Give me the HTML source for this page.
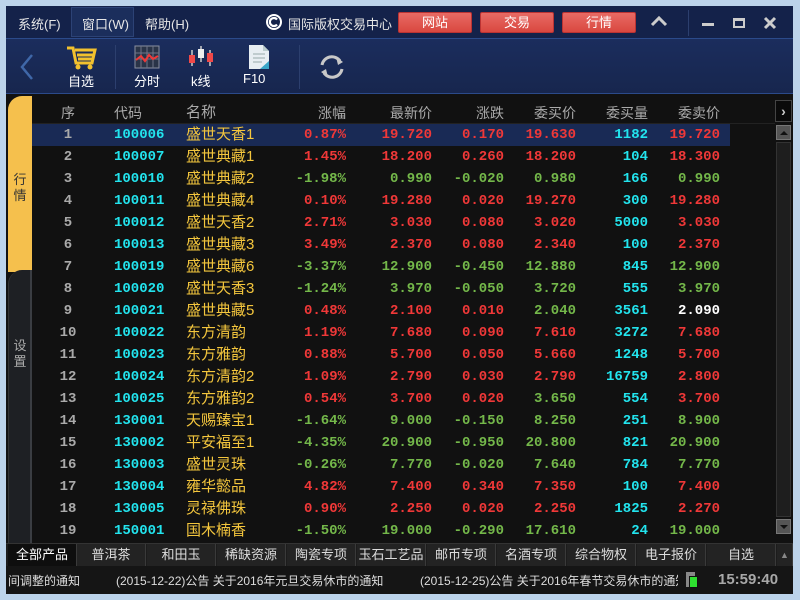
<!DOCTYPE html>
<html><head><meta charset="utf-8"><style>
*{margin:0;padding:0;box-sizing:border-box}
body{width:800px;height:600px;overflow:hidden;background:#bcd3ea;font-family:"Liberation Sans","Noto Sans CJK SC",sans-serif;position:relative}
.win{position:absolute;left:6px;top:6px;width:787px;height:588px;background:#111}
.menu{position:absolute;left:0;top:0;width:787px;height:32px;background:#14224a;color:#e6e6e6;font-size:13px}
.menu span{position:absolute;top:8px}
.mtab{position:absolute;left:65px;top:1px;width:63px;height:30px;background:#1b2e5c;border:1px solid #2c4275}
.btn{position:absolute;top:6px;height:21px;width:74px;background:linear-gradient(#e86a64,#d94840);border:1px solid #b33;border-radius:2px;color:#fff;font-size:13px;text-align:center;line-height:19px}
.tool{position:absolute;left:0;top:32px;width:787px;height:56px;background:linear-gradient(#1b2d5d,#17264e);border-top:1px solid #2b4a8a;border-bottom:1px solid #2b4a8a}
.tool .lbl{position:absolute;top:32px;color:#fff;font-size:13px}
.sep{position:absolute;top:6px;width:1px;height:44px;background:#2c3f6e}
.tab1{position:absolute;left:2px;top:90px;width:24px;height:176px;background:#f5c04d;border-radius:14px 0 0 0;color:#333;font-size:13px;text-align:center}
.tab2{position:absolute;left:2px;top:264px;width:24px;height:274px;background:#1e2024;border-left:1px solid #333;border-right:2px solid #3a3d42;border-radius:14px 0 0 0;color:#aaa;font-size:13px;text-align:center}
.grid{position:absolute;left:26px;top:88px;width:743px;height:450px;font-family:"Liberation Mono","Noto Sans CJK SC",monospace;font-weight:bold;font-size:14px}
.r{position:absolute;left:0;width:698px;height:22px;line-height:22px}
.r span{position:absolute;top:0;white-space:nowrap}
.a{left:16px;width:40px;text-align:center;color:#aaa}
.b{left:82px;color:#22e4ee}
.c{left:154px;color:#f4c63d;font-family:"Liberation Sans","Noto Sans CJK SC",sans-serif;font-weight:normal;font-size:15px}
.d{right:352px;text-align:right}.e{right:266px;text-align:right}.f{right:194px;text-align:right}.g{right:122px;text-align:right}.h{right:50px;text-align:right;color:#22e4ee}.i{right:-22px;text-align:right}
.R{color:#f03838}.G{color:#74b84a}.W{color:#fff}
.hd span{color:#aaa;font-family:"Liberation Sans","Noto Sans CJK SC",sans-serif;font-weight:normal}
.sb{position:absolute;left:769px;top:88px;width:18px;height:450px;background:#111}
.btabs{position:absolute;left:0;top:537px;width:787px;height:23px;background:#1c1c1c;border-top:1px solid #333}
.bt{position:absolute;top:0;height:23px;width:69px;border-right:1px solid #3a3a3a;background:#232323;color:#ddd;font-size:13px;text-align:center;line-height:22px}
.status{position:absolute;left:0;top:560px;width:787px;height:28px;background:#151515;color:#ddd;font-size:12px}
.status span{position:absolute;top:6px;white-space:nowrap}
</style></head><body>
<div class="win">
<div class="menu">
 <div class="mtab"></div>
 <span style="left:12px">系统(F)</span><span style="left:76px">窗口(W)</span><span style="left:139px">帮助(H)</span>
 <svg style="position:absolute;left:259px;top:7px" width="18" height="18"><circle cx="9" cy="9" r="8" fill="#fff"/><circle cx="9" cy="9" r="6" fill="#14224a"/><path d="M12 6.5A4 4 0 1 0 12 11.5" stroke="#fff" stroke-width="2.2" fill="none"/></svg>
 <span style="left:282px">国际版权交易中心</span>
 <div class="btn" style="left:392px">网站</div><div class="btn" style="left:474px">交易</div><div class="btn" style="left:556px">行情</div>
 <svg style="position:absolute;left:644px;top:8px" width="18" height="14"><path d="M2 11L9 4L16 11" stroke="#ccc" stroke-width="3" fill="none"/></svg>
 <div style="position:absolute;left:682px;top:4px;width:1px;height:26px;background:#2c3f6e"></div>
 <div style="position:absolute;left:696px;top:17px;width:12px;height:3px;background:#ccc"></div>
 <div style="position:absolute;left:727px;top:12px;width:12px;height:10px;border:2px solid #ccc;border-top-width:3px"></div>
 <svg style="position:absolute;left:757px;top:10px" width="14" height="14"><path d="M2 2L12 12M12 2L2 12" stroke="#ccc" stroke-width="3"/></svg>
</div>
<div class="tool">
 <svg style="position:absolute;left:12px;top:14px" width="18" height="28"><path d="M14 2L4 14L14 26" stroke="#3f67a8" stroke-width="2.5" fill="none"/></svg>
 <svg style="position:absolute;left:60px;top:6px" width="32" height="26"><path d="M1 3H7L10 18H26L29 5H9M11 10H28M12 14H27" stroke="#f2c12e" stroke-width="3" fill="none"/><circle cx="12" cy="22" r="2.5" fill="#f2c12e"/><circle cx="24" cy="22" r="2.5" fill="#f2c12e"/></svg>
 <span class="lbl" style="left:62px">自选</span>
 <div class="sep" style="left:109px"></div>
 <svg style="position:absolute;left:128px;top:6px" width="26" height="24"><rect x="1" y="1" width="24" height="22" fill="#2a3448" stroke="#8a8fa0"/><path d="M1 8H25M1 14H25M7 1V23M13 1V23M19 1V23" stroke="#6f7588"/><path d="M2 15L7 11L11 16L15 10L19 14L24 11" stroke="#f03838" stroke-width="2" fill="none"/></svg>
 <span class="lbl" style="left:128px">分时</span>
 <svg style="position:absolute;left:181px;top:5px" width="28" height="26"><path d="M5 6V22M14 2V18M23 6V22" stroke="#ccc" stroke-width="1.5"/><rect x="2" y="11" width="6" height="8" fill="#f04848"/><rect x="11" y="5" width="6" height="9" fill="#eee"/><rect x="20" y="9" width="6" height="9" fill="#f04848"/></svg>
 <span class="lbl" style="left:185px">k线</span>
 <svg style="position:absolute;left:242px;top:5px" width="22" height="26"><path d="M1 1H15L21 7V25H1Z" fill="#e8eef2"/><path d="M15 1V7H21" fill="#bcc"/><path d="M5 10H17M5 14H17M5 18H14" stroke="#9aa"/><path d="M12 25L21 17V25Z" fill="#3aa6c8"/></svg>
 <span class="lbl" style="left:237px">F10</span>
 <div class="sep" style="left:293px"></div>
 <svg style="position:absolute;left:312px;top:14px" width="28" height="28"><path d="M4 12A10 10 0 0 1 22 8M24 16A10 10 0 0 1 6 20" stroke="#c8c8c8" stroke-width="3" fill="none"/><path d="M18 4L25 9L20 12Z M10 24L3 19L8 16Z" fill="#c8c8c8"/></svg>
</div>
<div class="tab1"><div style="position:absolute;top:76px;width:24px;line-height:16px">行<br>情</div></div>
<div class="tab2"><div style="position:absolute;top:68px;width:22px;line-height:16px">设<br>置</div></div>
<div class="grid">
<div style="position:absolute;left:0;top:29px;width:743px;height:1px;background:#222"></div>
<div class="r hd" style="top:8px;width:666px"><span class="a">序</span><span class="b">代码</span><span class="c" style="color:#aaa">名称</span><span class="d">涨幅</span><span class="e">最新价</span><span class="f">涨跌</span><span class="g">委买价</span><span class="h" style="color:#aaa">委买量</span><span class="i">委卖价</span></div>
<div style="position:absolute;left:0;top:30px;width:698px;height:22px;background:#192a55"></div>
<div class="r" style="top:30px;width:666px"><span class="a">1</span><span class="b">100006</span><span class="c">盛世天香1</span><span class="d R">0.87%</span><span class="e R">19.720</span><span class="f R">0.170</span><span class="g R">19.630</span><span class="h">1182</span><span class="i R">19.720</span></div>
<div class="r" style="top:52px;width:666px"><span class="a">2</span><span class="b">100007</span><span class="c">盛世典藏1</span><span class="d R">1.45%</span><span class="e R">18.200</span><span class="f R">0.260</span><span class="g R">18.200</span><span class="h">104</span><span class="i R">18.300</span></div>
<div class="r" style="top:74px;width:666px"><span class="a">3</span><span class="b">100010</span><span class="c">盛世典藏2</span><span class="d G">-1.98%</span><span class="e G">0.990</span><span class="f G">-0.020</span><span class="g G">0.980</span><span class="h">166</span><span class="i G">0.990</span></div>
<div class="r" style="top:96px;width:666px"><span class="a">4</span><span class="b">100011</span><span class="c">盛世典藏4</span><span class="d R">0.10%</span><span class="e R">19.280</span><span class="f R">0.020</span><span class="g R">19.270</span><span class="h">300</span><span class="i R">19.280</span></div>
<div class="r" style="top:118px;width:666px"><span class="a">5</span><span class="b">100012</span><span class="c">盛世天香2</span><span class="d R">2.71%</span><span class="e R">3.030</span><span class="f R">0.080</span><span class="g R">3.020</span><span class="h">5000</span><span class="i R">3.030</span></div>
<div class="r" style="top:140px;width:666px"><span class="a">6</span><span class="b">100013</span><span class="c">盛世典藏3</span><span class="d R">3.49%</span><span class="e R">2.370</span><span class="f R">0.080</span><span class="g R">2.340</span><span class="h">100</span><span class="i R">2.370</span></div>
<div class="r" style="top:162px;width:666px"><span class="a">7</span><span class="b">100019</span><span class="c">盛世典藏6</span><span class="d G">-3.37%</span><span class="e G">12.900</span><span class="f G">-0.450</span><span class="g G">12.880</span><span class="h">845</span><span class="i G">12.900</span></div>
<div class="r" style="top:184px;width:666px"><span class="a">8</span><span class="b">100020</span><span class="c">盛世天香3</span><span class="d G">-1.24%</span><span class="e G">3.970</span><span class="f G">-0.050</span><span class="g G">3.720</span><span class="h">555</span><span class="i G">3.970</span></div>
<div class="r" style="top:206px;width:666px"><span class="a">9</span><span class="b">100021</span><span class="c">盛世典藏5</span><span class="d R">0.48%</span><span class="e R">2.100</span><span class="f R">0.010</span><span class="g G">2.040</span><span class="h">3561</span><span class="i W">2.090</span></div>
<div class="r" style="top:228px;width:666px"><span class="a">10</span><span class="b">100022</span><span class="c">东方清韵</span><span class="d R">1.19%</span><span class="e R">7.680</span><span class="f R">0.090</span><span class="g R">7.610</span><span class="h">3272</span><span class="i R">7.680</span></div>
<div class="r" style="top:250px;width:666px"><span class="a">11</span><span class="b">100023</span><span class="c">东方雅韵</span><span class="d R">0.88%</span><span class="e R">5.700</span><span class="f R">0.050</span><span class="g R">5.660</span><span class="h">1248</span><span class="i R">5.700</span></div>
<div class="r" style="top:272px;width:666px"><span class="a">12</span><span class="b">100024</span><span class="c">东方清韵2</span><span class="d R">1.09%</span><span class="e R">2.790</span><span class="f R">0.030</span><span class="g R">2.790</span><span class="h">16759</span><span class="i R">2.800</span></div>
<div class="r" style="top:294px;width:666px"><span class="a">13</span><span class="b">100025</span><span class="c">东方雅韵2</span><span class="d R">0.54%</span><span class="e R">3.700</span><span class="f R">0.020</span><span class="g G">3.650</span><span class="h">554</span><span class="i R">3.700</span></div>
<div class="r" style="top:316px;width:666px"><span class="a">14</span><span class="b">130001</span><span class="c">天赐臻宝1</span><span class="d G">-1.64%</span><span class="e G">9.000</span><span class="f G">-0.150</span><span class="g G">8.250</span><span class="h">251</span><span class="i G">8.900</span></div>
<div class="r" style="top:338px;width:666px"><span class="a">15</span><span class="b">130002</span><span class="c">平安福至1</span><span class="d G">-4.35%</span><span class="e G">20.900</span><span class="f G">-0.950</span><span class="g G">20.800</span><span class="h">821</span><span class="i G">20.900</span></div>
<div class="r" style="top:360px;width:666px"><span class="a">16</span><span class="b">130003</span><span class="c">盛世灵珠</span><span class="d G">-0.26%</span><span class="e G">7.770</span><span class="f G">-0.020</span><span class="g G">7.640</span><span class="h">784</span><span class="i G">7.770</span></div>
<div class="r" style="top:382px;width:666px"><span class="a">17</span><span class="b">130004</span><span class="c">雍华懿品</span><span class="d R">4.82%</span><span class="e R">7.400</span><span class="f R">0.340</span><span class="g R">7.350</span><span class="h">100</span><span class="i R">7.400</span></div>
<div class="r" style="top:404px;width:666px"><span class="a">18</span><span class="b">130005</span><span class="c">灵禄佛珠</span><span class="d R">0.90%</span><span class="e R">2.250</span><span class="f R">0.020</span><span class="g R">2.250</span><span class="h">1825</span><span class="i R">2.270</span></div>
<div class="r" style="top:426px;width:666px"><span class="a">19</span><span class="b">150001</span><span class="c">国木楠香</span><span class="d G">-1.50%</span><span class="e G">19.000</span><span class="f G">-0.290</span><span class="g G">17.610</span><span class="h">24</span><span class="i G">19.000</span></div>
</div>
<div class="sb">
 <div style="position:absolute;left:0;top:6px;width:17px;height:22px;background:#0a0a0a;border:1px solid #444;color:#ccc;font-size:14px;text-align:center;line-height:20px;font-weight:bold">›</div>
 <div style="position:absolute;left:1px;top:31px;width:15px;height:15px;background:#555;border:1px solid #777"><div style="margin:5px auto 0;width:0;height:0;border-left:4px solid transparent;border-right:4px solid transparent;border-bottom:4px solid #111"></div></div>
 <div style="position:absolute;left:1px;top:48px;width:15px;height:375px;background:#1e1e1e;border:1px solid #333"></div>
 <div style="position:absolute;left:1px;top:425px;width:15px;height:15px;background:#555;border:1px solid #777"><div style="margin:5px auto 0;width:0;height:0;border-left:4px solid transparent;border-right:4px solid transparent;border-top:4px solid #111"></div></div>
</div>
<div class="btabs">
 <div class="bt" style="left:2px;background:#0e0e0e;color:#fff">全部产品</div>
 <div class="bt" style="left:71px">普洱茶</div><div class="bt" style="left:141px">和田玉</div><div class="bt" style="left:211px">稀缺资源</div><div class="bt" style="left:281px">陶瓷专项</div><div class="bt" style="left:351px">玉石工艺品</div><div class="bt" style="left:421px">邮币专项</div><div class="bt" style="left:491px">名酒专项</div><div class="bt" style="left:561px">综合物权</div><div class="bt" style="left:631px">电子报价</div><div class="bt" style="left:701px">自选</div>
 <div class="bt" style="left:771px;width:16px;font-size:9px;color:#888">▲</div>
</div>
<div class="status">
 <span style="left:2px">间调整的通知</span>
 <span style="left:110px">(2015-12-22)公告 关于2016年元旦交易休市的通知</span>
 <span style="left:414px;width:258px;overflow:hidden">(2015-12-25)公告 关于2016年春节交易休市的通知</span>
 <div style="position:absolute;left:680px;top:6px;width:9px;height:15px;background:#888"></div>
 <div style="position:absolute;left:683px;top:10px;width:9px;height:12px;background:#2ee030;border:1px solid #111"></div>
 <span style="left:712px;top:5px;font-size:15px;font-weight:bold;color:#a8a8a8">15:59:40</span>
</div>
</div>
</body></html>
